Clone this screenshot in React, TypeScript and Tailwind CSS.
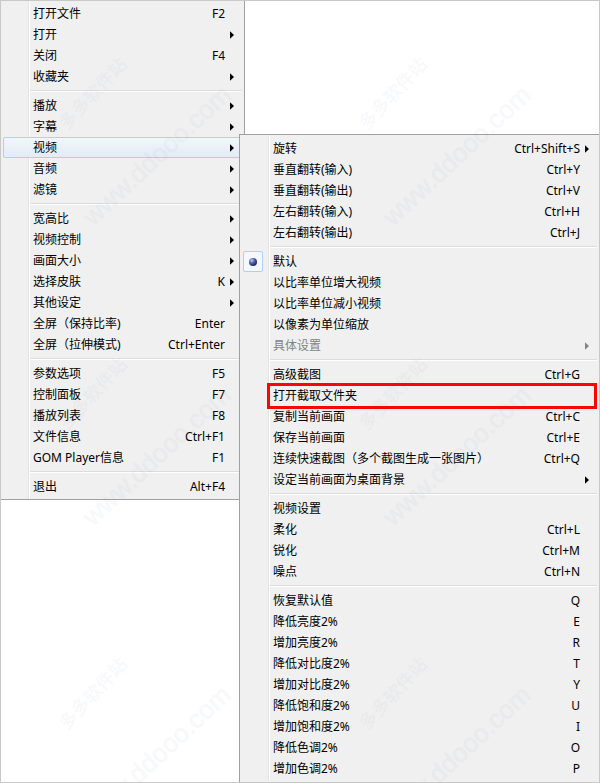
import { Fragment } from 'react';

interface MenuItem {
  label: string;
  shortcut?: string;
  submenu?: boolean;
  active?: boolean;
  disabled?: boolean;
  radio?: boolean;
  marked?: boolean;
}

const mainGroups: MenuItem[][] = [
  [
    { label: '打开文件', shortcut: 'F2' },
    { label: '打开', submenu: true },
    { label: '关闭', shortcut: 'F4' },
    { label: '收藏夹', submenu: true },
  ],
  [
    { label: '播放', submenu: true },
    { label: '字幕', submenu: true },
    { label: '视频', submenu: true, active: true },
    { label: '音频', submenu: true },
    { label: '滤镜', submenu: true },
  ],
  [
    { label: '宽高比', submenu: true },
    { label: '视频控制', submenu: true },
    { label: '画面大小', submenu: true },
    { label: '选择皮肤', shortcut: 'K', submenu: true },
    { label: '其他设定', submenu: true },
    { label: '全屏（保持比率)', shortcut: 'Enter' },
    { label: '全屏（拉伸模式)', shortcut: 'Ctrl+Enter' },
  ],
  [
    { label: '参数选项', shortcut: 'F5' },
    { label: '控制面板', shortcut: 'F7' },
    { label: '播放列表', shortcut: 'F8' },
    { label: '文件信息', shortcut: 'Ctrl+F1' },
    { label: 'GOM Player信息', shortcut: 'F1' },
  ],
  [{ label: '退出', shortcut: 'Alt+F4' }],
];

const videoGroups: MenuItem[][] = [
  [
    { label: '旋转', shortcut: 'Ctrl+Shift+S', submenu: true },
    { label: '垂直翻转(输入)', shortcut: 'Ctrl+Y' },
    { label: '垂直翻转(输出)', shortcut: 'Ctrl+V' },
    { label: '左右翻转(输入)', shortcut: 'Ctrl+H' },
    { label: '左右翻转(输出)', shortcut: 'Ctrl+J' },
  ],
  [
    { label: '默认', radio: true },
    { label: '以比率单位增大视频' },
    { label: '以比率单位减小视频' },
    { label: '以像素为单位缩放' },
    { label: '具体设置', submenu: true, disabled: true },
  ],
  [
    { label: '高级截图', shortcut: 'Ctrl+G' },
    { label: '打开截取文件夹', marked: true },
    { label: '复制当前画面', shortcut: 'Ctrl+C' },
    { label: '保存当前画面', shortcut: 'Ctrl+E' },
    { label: '连续快速截图（多个截图生成一张图片）', shortcut: 'Ctrl+Q' },
    { label: '设定当前画面为桌面背景', submenu: true },
  ],
  [
    { label: '视频设置' },
    { label: '柔化', shortcut: 'Ctrl+L' },
    { label: '锐化', shortcut: 'Ctrl+M' },
    { label: '噪点', shortcut: 'Ctrl+N' },
  ],
  [
    { label: '恢复默认值', shortcut: 'Q' },
    { label: '降低亮度2%', shortcut: 'E' },
    { label: '增加亮度2%', shortcut: 'R' },
    { label: '降低对比度2%', shortcut: 'T' },
    { label: '增加对比度2%', shortcut: 'Y' },
    { label: '降低饱和度2%', shortcut: 'U' },
    { label: '增加饱和度2%', shortcut: 'I' },
    { label: '降低色调2%', shortcut: 'O' },
    { label: '增加色调2%', shortcut: 'P' },
  ],
];

export default function App() {
  return (
    <div className="relative flex min-h-screen items-start overflow-hidden border border-[#c8c8c8] bg-white font-['Noto_Sans','Noto_Sans_CJK_SC',sans-serif] text-[12px] leading-[21px] text-black">
      <nav aria-label="主菜单" className="w-[244px] shrink-0 border-r border-b border-[#a0a0a0] bg-[#f0f0f0]">
        <MenuList groups={mainGroups} />
      </nav>
      <nav
        aria-label="视频"
        className="relative mt-[133px] -ml-[6px] min-w-0 flex-1 self-stretch border-t border-l border-[#a0a0a0] bg-[#f0f0f0] pt-px pl-px"
      >
        <MenuList groups={videoGroups} />
      </nav>
      <Watermark />
    </div>
  );
}

function MenuList({ groups }: { groups: MenuItem[][] }) {
  return (
    <ul className="relative p-[2px]">
      {/* Icon gutter line */}
      <li role="presentation" className="absolute inset-y-0 left-[27px] w-[2px] border-l border-[#e2e3e3] bg-white" />
      {groups.map((group, i) => (
        <Fragment key={i}>
          {i > 0 && (
            <li role="separator" className="flex h-2 items-center pl-[27px]">
              <div className="h-[2px] w-full border-t border-[#dcdcdc] bg-white" />
            </li>
          )}
          {group.map((item) => (
            <MenuRow key={item.label} item={item} />
          ))}
        </Fragment>
      ))}
    </ul>
  );
}

function MenuRow({ item }: { item: MenuItem }) {
  if (item.radio) {
    return (
      <li className="relative">
        <label className="flex h-[21px] items-center">
          <span className="flex h-[21px] w-[20px] items-center justify-center rounded-[2px] border border-[#aecff7] bg-[#f4f8fd]">
            <input
              type="radio"
              name="video-size"
              defaultChecked
              className="size-2 appearance-none rounded-full bg-[radial-gradient(circle_at_35%_30%,#c5cdf2_0%,#5565a8_35%,#1a2560_75%)]"
            />
          </span>
          <span className="pl-[10px]">{item.label}</span>
        </label>
      </li>
    );
  }

  return (
    <li className="relative">
      <button
        type="button"
        disabled={item.disabled}
        className={`flex h-[21px] w-full items-center rounded-[2px] border pl-[29px] text-left whitespace-nowrap ${
          item.active ? 'border-[#aecff7] bg-linear-to-b from-[#f3f6fb] to-[#e3ebf7]' : 'border-transparent'
        } ${item.disabled ? 'text-[#838383]' : ''}`}
      >
        <span className="flex-1">{item.label}</span>
        <span>{item.shortcut}</span>
        <span className="flex w-4 justify-start pl-[5px]">{item.submenu && <Arrow />}</span>
      </button>
      {item.marked && (
        <div className="pointer-events-none absolute -top-[2px] right-0 -bottom-[3px] left-[24px] border-3 border-[#fb0505]" />
      )}
    </li>
  );
}

function Arrow() {
  return (
    <svg width="4" height="8" viewBox="0 0 4 8" fill="currentColor" aria-hidden="true">
      <path d="M0 0.3 L4 4 L0 7.7 Z" />
    </svg>
  );
}

function Watermark() {
  const tiles = [0, 300, 600].flatMap((y) => [0, 300].map((x) => ({ x, y })));
  return (
    <svg className="pointer-events-none absolute inset-0 size-full fill-[#4a5f9c] opacity-[0.035]" aria-hidden="true">
      {tiles.map(({ x, y }) => (
        <g key={`${x}-${y}`} transform={`translate(${x} ${y})`}>
          <text transform="translate(66 130) rotate(-47)" fontSize="18" fontWeight="500">
            多多软件站
          </text>
          <text
            transform="translate(92 226) rotate(-43)"
            fontSize="26"
            className="font-['Liberation_Sans',sans-serif]"
            stroke="#4a5f9c"
            strokeWidth="0.6"
          >
            www.ddooo.com
          </text>
        </g>
      ))}
    </svg>
  );
}
